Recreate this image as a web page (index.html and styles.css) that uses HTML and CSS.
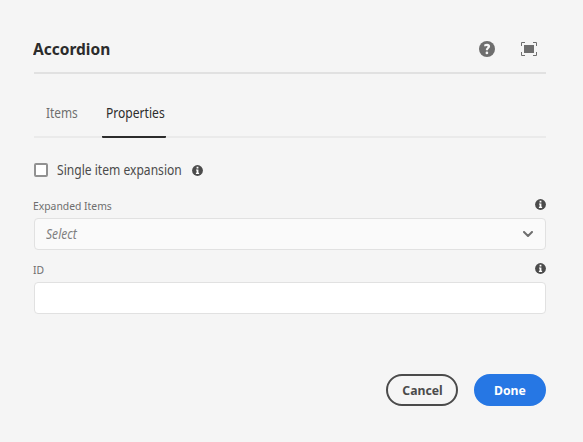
FILE: index.html
```html
<!DOCTYPE html>
<html lang="en">
<head>
<meta charset="utf-8">
<title>Accordion</title>
<link rel="stylesheet" href="styles.css">
</head>
<body>
<svg width="0" height="0" class="defs">
  <symbol id="info" viewBox="0 0 11 11">
    <circle cx="5.5" cy="5.5" r="5.4" fill="#4b4b4b"/>
    <path d="M4.6 1.8h1.8v1.7H4.6zM4 4.5h2.4v3.3h.7v1.1H3.9V7.8h.7V5.5H4z" fill="#fff"/>
  </symbol>
</svg>
<main class="dialog">
  <header class="header">
    <h1 class="title"><span class="fit fit-title">Accordion</span></h1>
    <div class="actions">
      <svg width="16" height="16" viewBox="0 0 16 16"><circle cx="8" cy="8" r="8" fill="#6e6e6e"/><path d="M5 3.7C6 3.1 7 2.8 8.1 2.8c1.9 0 3 1 3 2.5 0 1.2-.7 1.9-1.4 2.5-.6.5-.8.8-.7 1.5H6.9c-.2-1.3.3-1.9 1-2.6.6-.5.8-.7.8-1.1 0-.5-.4-.7-1.1-.7-.8 0-1.5.2-2.1.6z" fill="#f5f5f5"/><circle cx="7.9" cy="11.9" r="1.35" fill="#f5f5f5"/></svg>
      <svg width="16" height="14" viewBox="0 0 16 14"><path d="M.5 4V.5H4M12 .5h3.5V4M15.5 10v3.5H12M4 13.5H.5V10" fill="none" stroke="#6e6e6e"/><path d="M3 3h10v8H3z" fill="#6e6e6e"/></svg>
    </div>
  </header>
  <nav class="tabs">
    <a class="tab"><span class="fit fit-items">Items</span></a>
    <a class="tab active"><span class="fit fit-properties">Properties</span></a>
  </nav>
  <div class="check-row">
    <span class="checkbox"></span>
    <span class="check-label"><span class="fit fit-check">Single item expansion</span></span>
    <svg width="11" height="11"><use href="#info"/></svg>
  </div>
  <div class="field">
    <div class="label"><span class="fit fit-expanded">Expanded Items</span><svg width="11" height="11"><use href="#info"/></svg></div>
    <div class="control select"><span class="fit fit-select">Select</span>
      <svg width="10" height="6" viewBox="0 0 10 6"><path d="M1 1l4 4 4-4" fill="none" stroke="#6e6e6e" stroke-width="2" stroke-linecap="round" stroke-linejoin="round"/></svg>
    </div>
  </div>
  <div class="field">
    <div class="label"><span class="fit fit-id">ID</span><svg width="11" height="11"><use href="#info"/></svg></div>
    <div class="control"></div>
  </div>
  <footer class="footer">
    <div class="button"><span class="fit-button">Cancel</span></div>
    <div class="button primary"><span class="fit-button">Done</span></div>
  </footer>
</main>
</body>
</html>
```
FILE: styles.css
```css
* { box-sizing: border-box; }
body { margin: 0; background: #f5f5f5; font-family: "Noto Sans", "Open Sans", sans-serif; font-size: 13.5px; color: #4b4b4b; }
svg { display: block; flex: none; }
.defs { position: absolute; }
.dialog { width: 583px; height: 442px; padding: 24px 37px 0 34px; }
.header { height: 50px; display: flex; align-items: center; justify-content: space-between; border-bottom: 2px solid #e1e1e1; }
.title { margin: 2px 0 0 -1px; font-size: 16.5px; line-height: 24px; font-weight: 700; color: #2c2c2c; }
.actions { display: flex; align-items: center; gap: 26px; padding: 2px 9px 0 0; }
.tabs { height: 48px; margin-top: 16px; display: flex; gap: 16px; padding-left: 8px; border-bottom: 2px solid #eaeaea; }
.tab { height: 48px; width: 44px; padding: 0 4px; line-height: 47px; color: #6e6e6e; }
.tab.active { width: 64px; color: #2c2c2c; border-bottom: 2px solid #2c2c2c; border-radius: 1px; }
/* Condense the wide text face */
.fit, .fit-button { display: inline-block; white-space: nowrap; }
.fit { transform-origin: left center; }
.fit-title { transform: scaleX(.94); }
.fit-items { transform: scaleX(.88); }
.fit-properties, .fit-check, .fit-select { transform: scaleX(.895); }
.fit-expanded, .fit-id { transform: scaleX(.9); }
.fit-button { transform: scaleX(.94); }
.check-row { height: 32px; margin-top: 16px; display: flex; align-items: center; }
.checkbox { width: 14px; height: 14px; border: 2px solid #919191; border-radius: 2px; background: #fff; }
.check-label { width: 125px; margin: 0 10px 0 9px; }
.field { margin-top: 10px; }
.label { height: 22px; display: flex; justify-content: space-between; font-size: 11.5px; line-height: 20px; color: #6e6e6e; margin-left: -1px; }
.label svg { margin: 2.5px 0 0; }
.control { height: 32px; border: 1px solid #e1e1e1; border-radius: 4px; background: #fff; display: flex; align-items: center; justify-content: space-between; padding: 0 12px 0 11px; }
.select { background: #fafafa; color: #808080; font-style: italic; }
.footer { margin-top: 60px; display: flex; justify-content: flex-end; gap: 16px; }
.button { width: 72px; height: 32px; border: 2px solid #4b4b4b; border-radius: 16px; display: flex; align-items: center; justify-content: center; font-weight: 700; font-size: 13px; }
.primary { background: #2677e4; border-color: #2677e4; color: #fff; }
```
